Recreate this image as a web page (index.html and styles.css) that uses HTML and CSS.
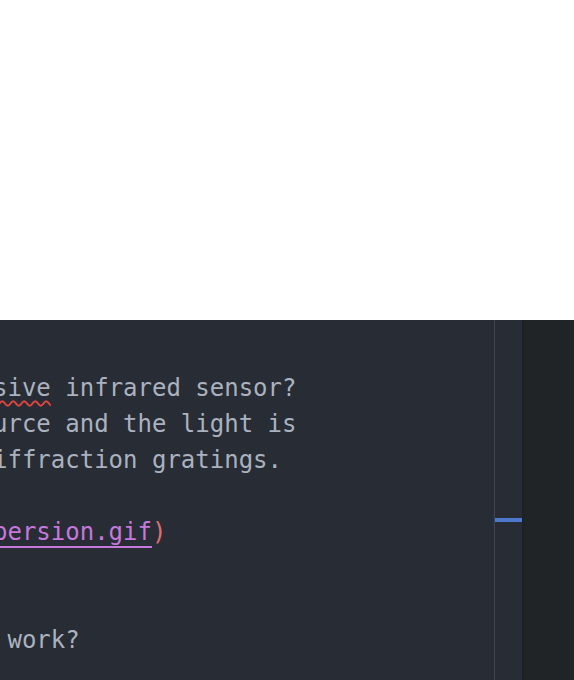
FILE: index.html
```html
<!DOCTYPE html>
<html lang="en">
<head>
<meta charset="utf-8">
<title>Editor</title>
<link rel="stylesheet" href="styles.css">
</head>
<body>
<div class="page">
  <div class="blank"></div>
  <div class="workspace">
    <div class="editor">
      <div class="lines">
        <div class="line"> </div>
        <div class="line">What is a <span class="misspelled">passive</span> infrared sensor?</div>
        <div class="line">Consider a source and the light is</div>
        <div class="line">spread with diffraction gratings.</div>
        <div class="line"> </div>
        <div class="line"><span class="punct">![](</span><span class="link">media/dispersion.gif</span><span class="punct">)</span></div>
        <div class="line"> </div>
        <div class="line"> </div>
        <div class="line">How does that work?</div>
      </div>
    </div>
    <div class="scrollbar">
      <div class="marker"></div>
    </div>
    <div class="side"></div>
  </div>
</div>
</body>
</html>
```
FILE: styles.css
```css
html, body {
  margin: 0;
  padding: 0;
  background: #ffffff;
}
.page {
  width: 574px;
  height: 680px;
  display: flex;
  flex-direction: column;
  overflow: hidden;
}
.blank {
  height: 320px;
  flex: none;
  background: #ffffff;
}
.workspace {
  flex: 1;
  display: flex;
  background: #282c34;
  min-height: 0;
}
.editor {
  flex: 1;
  overflow: hidden;
  min-width: 0;
}
.lines {
  font-family: "DejaVu Sans Mono", "Liberation Mono", monospace;
  font-size: 24px;
  line-height: 36px;
  color: #abb2bf;
  padding-top: 14px;
  margin-left: calc(-13ch - 7px);
}
.line {
  height: 36px;
  white-space: pre;
}
.misspelled {
  text-decoration: underline wavy #e0443e;
  text-decoration-thickness: 1.5px;
  text-underline-offset: 4px;
}
.link {
  color: #c678dd;
  text-decoration: underline #c678dd;
  text-decoration-thickness: 2px;
  text-underline-offset: 6px;
}
.punct {
  color: #e06c75;
}
.scrollbar {
  width: 27px;
  flex: none;
  border-left: 1px solid #414550;
  position: relative;
  background: #282c34;
}
.marker {
  position: absolute;
  left: 0;
  right: 0;
  top: 198px;
  height: 4px;
  background: #4d78cc;
}
.side {
  width: 50px;
  flex: none;
  border-left: 2px solid #1d2025;
  background: #212427;
}
```
